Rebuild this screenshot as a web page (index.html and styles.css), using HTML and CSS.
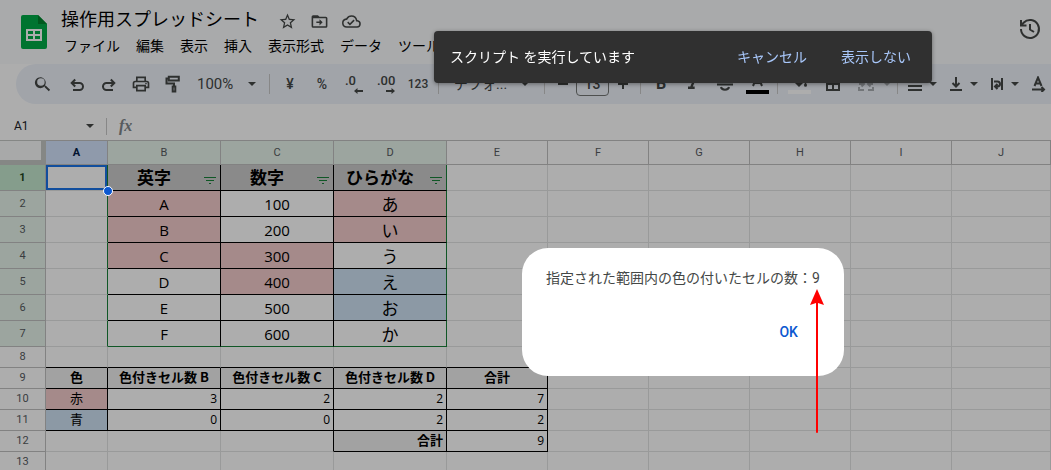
FILE: index.html
```html
<!DOCTYPE html>
<html lang="ja">
<head>
<meta charset="utf-8">
<title>操作用スプレッドシート</title>
<link rel="stylesheet" href="styles.css">
</head>
<body>
<div class="app">
  <header class="top">
    <svg class="logo" viewBox="0 0 26 34" aria-hidden="true">
      <path fill="#00ac47" d="M2 0h15l9 9v23a2 2 0 0 1-2 2H2a2 2 0 0 1-2-2V2a2 2 0 0 1 2-2z"/>
      <path fill="#00832d" d="M17 0l9 9h-9z"/>
      <path fill="#fff" fill-rule="evenodd" d="M5 14h16v12H5zM7 16v3h5v-3zM14 16v3h5v-3zM7 21v3h5v-3zM14 21v3h5v-3z"/>
    </svg>
    <div class="heading">
      <div class="title-row">
        <h1 class="title">操作用スプレッドシート</h1>
        <button class="mini" aria-label="スター"><svg width="20" height="20" viewBox="0 0 24 24"><path d="M22 9.24l-7.19-.62L12 2 9.19 8.63 2 9.24l5.46 4.73L5.82 21 12 17.27 18.18 21l-1.63-7.03zM12 15.4l-3.76 2.27 1-4.28-3.32-2.88 4.38-.38L12 6.1l1.71 4.04 4.38.38-3.32 2.88 1 4.28z"/></svg></button>
        <button class="mini" aria-label="移動"><svg width="20" height="20" viewBox="0 0 24 24"><path d="M20 6h-8l-2-2H4a2 2 0 0 0-2 2v12a2 2 0 0 0 2 2h16a2 2 0 0 0 2-2V8a2 2 0 0 0-2-2zm0 12H4V8h16zm-8-1 4-4-4-4v3H8v2h4z"/></svg></button>
        <button class="mini" aria-label="保存済み"><svg width="20" height="20" viewBox="0 0 24 24"><path d="M19.35 10.04A7.49 7.49 0 0 0 12 4a7.5 7.5 0 0 0-6.65 4.04A6 6 0 0 0 6 20h13a5 5 0 0 0 .35-9.96zM19 18H6a4 4 0 0 1-.42-7.98l1.07-.11.5-.95A5.47 5.47 0 0 1 12 6a5.5 5.5 0 0 1 5.39 4.43l.3 1.5 1.53.11A3 3 0 0 1 19 18zm-9-3.82-2.09-2.09L6.5 13.5 10 17l6.01-6.01-1.41-1.41z"/></svg></button>
      </div>
      <nav class="menu">
        <button>ファイル</button><button>編集</button><button>表示</button><button>挿入</button><button>表示形式</button><button>データ</button><button>ツール</button>
      </nav>
    </div>
    <button class="history" aria-label="変更履歴"><svg width="24" height="24" viewBox="0 0 24 24"><path class="line" d="M3 12a9 9 0 1 0 2.6-6.3L3 8.2M3 3v5.500h5.500M12 7v5.500l4 2.500"/></svg></button>
  </header>

  <div class="toolbar" role="toolbar">
    <button class="tb wide" aria-label="検索"><svg width="20" height="20" viewBox="0 0 24 24"><path d="M15.500 14h-.79l-.28-.27A6.5 6.500 0 1 0 13.730 14.710l.27.28v.79l5 4.990L20.490 19zM9.500 14a4.500 4.500 0 1 1 0-9 4.500 4.500 0 0 1 0 9z"/></svg></button>
    <button class="tb" aria-label="元に戻す"><svg class="low" width="16" height="16" viewBox="0 0 16 16"><path class="line" d="M4 13h6.500a3.500 3.500 0 0 0 0-7H3M6.200 2.500 2.700 6l3.500 3.500"/></svg></button>
    <button class="tb" aria-label="やり直し"><svg class="low" width="16" height="16" viewBox="0 0 16 16"><path class="line" d="M12 13H5.500a3.500 3.500 0 0 1 0-7H13M9.800 2.500 13.300 6 9.800 9.500"/></svg></button>
    <button class="tb" aria-label="印刷"><svg width="20" height="20" viewBox="0 0 24 24"><path d="M19 8h-1V3H6v5H5a3 3 0 0 0-3 3v6h4v4h12v-4h4v-6a3 3 0 0 0-3-3zM8 5h8v3H8zm8 14H8v-4h8zm2-4v-2H6v2H4v-4a1 1 0 0 1 1-1h14a1 1 0 0 1 1 1v4z"/><circle cx="18" cy="11.500" r="1"/></svg></button>
    <button class="tb" aria-label="書式を貼り付け"><svg width="16" height="18" viewBox="0 0 16 18"><path class="line" d="M3.800 1.800h10v3.700h-10zM3.800 3.500H1.500v5H9v3M7.700 11.500h2.600v5H7.700z"/></svg></button>
    <button class="zoom"><span>100%</span><i class="caret"></i></button>
    <span class="sep"></span>
    <button class="tb txt">¥</button>
    <button class="tb txt">%</button>
    <button class="tb dec" aria-label="小数点以下の桁数を減らす"><span>.0</span><svg width="9" height="6" viewBox="0 0 9 6"><path d="M0 3l3.500-3v2H9v2H3.500v2z"/></svg></button>
    <button class="tb dec" aria-label="小数点以下の桁数を増やす"><span>.00</span><svg width="9" height="6" viewBox="0 0 9 6"><path d="M9 3L5.500 0v2H0v2h5.500v2z"/></svg></button>
    <button class="tb num">123</button>
    <span class="sep"></span>
    <button class="font"><span>デフォ...</span><i class="caret"></i></button>
    <span class="sep"></span>
    <button class="step" aria-label="縮小"><svg width="12" height="12" viewBox="0 0 12 12"><path d="M1 5h10v2H1z"/></svg></button>
    <input class="size" value="13" aria-label="フォントサイズ">
    <button class="step" aria-label="拡大"><svg width="12" height="12" viewBox="0 0 12 12"><path d="M1 5h4V1h2v4h4v2H7v4H5V7H1z"/></svg></button>
    <span class="sep"></span>
    <button class="tb bold">B</button>
    <button class="tb" aria-label="斜体"><svg width="20" height="20" viewBox="0 0 24 24"><path d="M10 4v3h2.210l-3.420 8H6v3h8v-3h-2.210l3.420-8H18V4z"/></svg></button>
    <button class="tb" aria-label="取り消し線"><svg width="18" height="18" viewBox="0 0 18 18"><path class="line" d="M1 9.500h16M13 5c0-4-8-4-8 0M5 12c.5 3.500 7.500 3.500 8 0"/></svg></button>
    <button class="tb" aria-label="テキストの色"><svg width="23" height="22" viewBox="0 0 23 22"><path class="line" d="M7 13 11.500 2 16 13M8.500 10h6"/><path fill="#000" d="M0 17h23v4H0z"/></svg></button>
    <span class="sep"></span>
    <button class="tb paint" aria-label="塗りつぶしの色"><svg width="23" height="22" viewBox="0 0 23 22"><path d="M5 8l6-6 6 6-6 6zM17.500 9.500c1 1.300 1.500 2 1.500 2.700a1.500 1.500 0 0 1-3 0c0-.7.500-1.400 1.500-2.700z"/><path fill="#fff" d="M0 17h23v4H0z"/></svg></button>
    <button class="tb" aria-label="枠線"><svg width="14" height="14" viewBox="0 0 14 14"><path class="line" d="M1 1h12v12H1zM7 1v12M1 7h12"/></svg></button>
    <button class="split faint" aria-label="セルを結合"><svg width="16" height="16" viewBox="0 0 16 16"><path class="line" d="M6 2H1v3M10 2h5v3M6 14H1v-3M10 14h5v-3M1 8h4M15 8h-4M3.500 5.500 6 8l-2.500 2.500M12.500 5.500 10 8l2.500 2.500"/></svg><i class="caret"></i></button>
    <span class="sep"></span>
    <button class="split" aria-label="水平方向の配置"><svg width="14" height="14" viewBox="0 0 14 14"><path d="M0 0h14v2H0zM3 4h8v2H3zM0 8h14v2H0zM3 8h8v2H3zM0 12h14v2H0z"/></svg><i class="caret"></i></button>
    <button class="split" aria-label="垂直方向の配置"><svg width="14" height="16" viewBox="0 0 14 16"><path class="line" d="M7 1v9M3.500 7 7 10.500 10.500 7M1 14h12"/></svg><i class="caret"></i></button>
    <button class="split" aria-label="テキストの折り返し"><svg width="14" height="14" viewBox="0 0 14 14"><path class="line" d="M2 1v12M12 1v12M4 4.500h3.500a2.500 2.500 0 0 1 0 5H5.500M7.500 7 5 9.500 7.500 12"/></svg><i class="caret"></i></button>
    <button class="tb rotate" aria-label="テキストの回転"><svg width="14" height="16" viewBox="0 0 14 16"><path class="line" d="M2.500 10 6 1.500 9.500 10M3.500 7.500h5M0 13.500h11M9.500 11l2.500 2.500L9.500 16"/></svg></button>
  </div>

  <div class="formula">
    <input class="name-box" value="A1" aria-label="名前ボックス">
    <i class="caret"></i>
    <span class="bar"></span>
    <span class="fx">fx</span>
  </div>

  <table class="grid">
    <colgroup><col class="c-head"><col class="c-a"><col class="c-b"><col class="c-b"><col class="c-b"><col class="c-e"><col class="c-e"><col class="c-e"><col class="c-e"><col class="c-e"><col></colgroup>
    <thead>
      <tr><th class="corner"></th><th class="active">A</th><th class="on">B</th><th class="on">C</th><th class="on">D</th><th>E</th><th>F</th><th>G</th><th>H</th><th>I</th><th>J</th></tr>
    </thead>
    <tbody class="main">
      <tr><th class="now">1</th><td class="sel"><span class="handle"></span></td>
        <td class="label">英字<svg class="filter" width="12" height="8" viewBox="0 0 12 8"><path d="M0 0h12v1H0zM2 3h8v1H2zM5 6h2v1H5z"/></svg></td>
        <td class="label">数字<svg class="filter" width="12" height="8" viewBox="0 0 12 8"><path d="M0 0h12v1H0zM2 3h8v1H2zM5 6h2v1H5z"/></svg></td>
        <td class="label">ひらがな<svg class="filter" width="12" height="8" viewBox="0 0 12 8"><path d="M0 0h12v1H0zM2 3h8v1H2zM5 6h2v1H5z"/></svg></td>
        <td></td><td></td><td></td><td></td><td></td><td></td></tr>
      <tr><th>2</th><td></td><td class="red">A</td><td>100</td><td class="red">あ</td><td></td><td></td><td></td><td></td><td></td><td></td></tr>
      <tr><th>3</th><td></td><td class="red">B</td><td>200</td><td class="red">い</td><td></td><td></td><td></td><td></td><td></td><td></td></tr>
      <tr><th>4</th><td></td><td class="red">C</td><td class="red">300</td><td>う</td><td></td><td></td><td></td><td></td><td></td><td></td></tr>
      <tr><th>5</th><td></td><td>D</td><td class="red">400</td><td class="blue">え</td><td></td><td></td><td></td><td></td><td></td><td></td></tr>
      <tr><th>6</th><td></td><td>E</td><td>500</td><td class="blue">お</td><td></td><td></td><td></td><td></td><td></td><td></td></tr>
      <tr><th>7</th><td></td><td>F</td><td>600</td><td>か</td><td></td><td></td><td></td><td></td><td></td><td></td></tr>
    </tbody>
    <tbody class="sum">
      <tr><th>8</th><td class="kb"></td><td class="kb"></td><td class="kb"></td><td class="kb"></td><td class="kb"></td><td></td><td></td><td></td><td></td><td></td></tr>
      <tr><th>9</th><td class="k name">色</td><td class="k name">色付きセル数 B</td><td class="k name">色付きセル数 C</td><td class="k name">色付きセル数 D</td><td class="k name">合計</td><td></td><td></td><td></td><td></td><td></td></tr>
      <tr><th>10</th><td class="k mid red">赤</td><td class="k">3</td><td class="k">2</td><td class="k">2</td><td class="k">7</td><td></td><td></td><td></td><td></td><td></td></tr>
      <tr><th>11</th><td class="k mid blue">青</td><td class="k">0</td><td class="k">0</td><td class="k">2</td><td class="k">2</td><td></td><td></td><td></td><td></td><td></td></tr>
      <tr><th>12</th><td></td><td></td><td class="kr"></td><td class="k name end">合計</td><td class="k">9</td><td></td><td></td><td></td><td></td><td></td></tr>
      <tr><th>13</th><td></td><td></td><td></td><td></td><td></td><td></td><td></td><td></td><td></td><td></td></tr>
    </tbody>
  </table>
</div>

<div class="scrim"></div>

<div class="toast" role="status">
  <span class="message">スクリプト を実行しています</span>
  <button>キャンセル</button>
  <button>表示しない</button>
</div>

<div class="dialog" role="alertdialog" aria-labelledby="msg">
  <p id="msg">指定された範囲内の色の付いたセルの数：9</p>
  <button>OK</button>
</div>

<svg class="pointer" width="14" height="144" viewBox="0 0 14 144" aria-hidden="true"><path fill="#f00" d="M7 0l7 16-6-2v129a1 1 0 0 1-2 0V14l-6 2z"/></svg>
</body>
</html>
```

FILE: styles.css
```css
* { box-sizing: border-box; }

body {
  margin: 0;
  height: 100vh;
  overflow: hidden;
  background: #fff;
  color: #000;
  font: 14px/20px Roboto, "Noto Sans CJK JP", sans-serif;
}

button {
  margin: 0;
  padding: 0;
  border: 0;
  background: none;
  color: inherit;
  font: inherit;
  white-space: nowrap;
}

input {
  margin: 0;
  padding: 0;
  border: 0;
  background: none;
  font: inherit;
}

svg { display: block; flex: none; fill: #444746; }
.line { fill: none; stroke: #444746; stroke-width: 2; }

.app { height: 100%; overflow: hidden; }

/* header */
.top {
  display: flex;
  height: 64px;
  padding: 7px 8px 0 21px;
  background: #f9fbfd;
}
.logo { width: 26px; height: 34px; margin-top: 8px; }
.heading { flex: 1; padding-left: 14px; }
.title-row { display: flex; align-items: center; height: 26px; }
.title { margin: 0 12px 0 0; font-size: 18px; line-height: 26px; font-weight: 400; }
.mini { display: flex; justify-content: center; width: 32px; padding-top: 2px; }
.mini svg { width: 19px; height: 19px; }
.menu { display: flex; gap: 16px; padding: 3px 0 0 3px; }
.history { align-self: flex-start; padding: 10px 1px; }

/* toolbar */
.toolbar {
  display: flex;
  align-items: center;
  height: 40px;
  margin-left: 16px;
  padding-left: 9px;
  border-radius: 20px 0 0 20px;
  background: #edf2fa;
  color: #444746;
  overflow: hidden;
}
.toolbar > * { flex: none; }
.tb { display: flex; align-items: center; justify-content: center; width: 32px; height: 32px; }
.wide { width: 36px; }
.paint { width: 35px; }
.rotate { width: 28px; }
.low { margin-top: 2px; }
.txt { font-size: 14px; font-weight: 500; }
.num { font-size: 12px; font-weight: 500; }
.bold { font-size: 16px; font-weight: 700; }
.dec { flex-direction: column; align-items: flex-start; padding-left: 7px; font-size: 13px; line-height: 14px; font-weight: 500; }
.dec svg { margin-left: 9px; }
.zoom { display: flex; align-items: center; justify-content: space-between; width: 76px; padding: 0 9px 0 8px; font-size: 15px; }
.font { display: flex; align-items: center; justify-content: space-between; width: 97px; padding: 0 11px; }
.caret { flex: none; border: 4px solid transparent; border-top-color: #444746; border-bottom: 0; }
.sep { width: 1px; height: 20px; margin: 0 4px; background: #c7c7c7; }
.step { display: flex; align-items: center; justify-content: center; width: 27px; height: 24px; }
.size { width: 33px; height: 24px; border: 1px solid #747775; border-radius: 4px; text-align: center; color: #444746; font-weight: 500; }
.split { display: flex; align-items: center; gap: 7px; width: 41px; padding-left: 6px; }
.split.faint { gap: 9px; width: 44px; padding-left: 9px; opacity: .4; }

/* formula bar */
.formula { display: flex; align-items: center; height: 36px; padding: 8px 0 0 14px; }
.name-box { width: 72px; font-size: 12px; color: #202124; }
.bar { width: 1px; height: 17px; margin: 0 12px; background: #c7c7c7; }
.fx { color: #80868b; font: italic 700 16px/18px "Liberation Serif", serif; }

/* sheet */
.grid { width: 100%; table-layout: fixed; border-collapse: separate; border-spacing: 0; }
.c-head { width: 46px; }
.c-a { width: 62px; }
.c-b { width: 113px; }
.c-e { width: 101px; }
.grid th, .grid td { padding: 0; border: solid #e2e3e3; border-width: 0 1px 1px 0; white-space: nowrap; }
.grid th { border-color: #c0c0c0; color: #575b5f; font-size: 11px; line-height: 14px; font-weight: 400; }
.grid thead th { height: 25px; border-top-width: 1px; }
.grid thead .corner { border: solid #c4c7c5; border-width: 1px 5px 5px 0; background: #f8f9fa; }
.grid .active { background: #d3e3fd; color: #041e49; font-weight: 700; }
.grid .on, .main th { background: #e6f4ea; }
.grid .now { background: #c4e8cf; color: #1e4620; font-weight: 700; }

.main tr { height: 26px; }
.main td { line-height: 24px; text-align: center; font-size: 17px; font-family: "Noto Sans CJK JP", sans-serif; }
.main td:nth-child(3), .main td:nth-child(4) { border-color: #000; font-family: "Open Sans", "Noto Sans CJK JP", sans-serif; font-size: 15px; }
.main td:nth-child(5) { border-color: #000; }
.main td:nth-child(2), .main td:nth-child(5) { border-right-color: #188038; }
.main tr:last-child td:nth-child(n+3):nth-child(-n+5) { border-bottom-color: #188038; }
.main .label.label { position: relative; padding: 0 20px 2px 0; background: #ccc; font: 700 17px/22px "Noto Sans CJK JP", sans-serif; }
.filter { position: absolute; right: 4px; bottom: 5px; fill: #188038; }
.grid .sel { position: relative; box-shadow: inset 0 0 0 2px #1a73e8; }
.handle { position: absolute; z-index: 1; right: -6px; bottom: -6px; width: 10px; height: 10px; border: 1px solid #fff; border-radius: 50%; background: #0b57d0; }

.sum tr { height: 21px; }
.grid.grid .sum td, .sum td { text-align: right; font: 12px/18px "Open Sans", "Noto Sans CJK JP", sans-serif; }
.grid .sum .k { padding-right: 3px; border-color: #000; }
.grid .sum .kb { border-bottom-color: #000; }
.grid .sum .kr { border-right-color: #000; }
.grid.grid .sum .name { padding: 0 0 2px; background: #efefef; text-align: center; font: 700 13px/18px "Noto Sans CJK JP", sans-serif; }
.grid.grid .sum .end { padding-right: 3px; text-align: right; }
.grid.grid .sum .mid { padding: 0 0 2px; text-align: center; font-size: 13px; }
.grid .red { background: #f4cccc; }
.grid .blue { background: #cfe2f3; }

/* layers over the sheet */
.scrim { position: fixed; inset: 0; background: rgba(0, 0, 0, .32); }

.toast {
  position: absolute;
  left: 434px;
  top: 31px;
  display: flex;
  align-items: center;
  gap: 34px;
  padding: 16px 21px 16px 16px;
  border-radius: 4px;
  background: #303030;
  box-shadow: 0 1px 4px rgba(0, 0, 0, .4);
  color: #fff;
}
.toast .message { margin-right: 68px; white-space: nowrap; }
.toast button { color: #a8c7fa; }

.dialog {
  position: absolute;
  left: 522px;
  top: 248px;
  display: flex;
  flex-direction: column;
  align-items: flex-end;
  padding: 20px 24px 34px;
  border-radius: 26px;
  background: #fff;
  color: #444746;
}
.dialog p { margin: 0 0 34px; white-space: nowrap; }
.dialog button { margin-right: 22px; color: #0b57d0; font-weight: 500; }

.pointer { position: absolute; left: 810px; top: 289px; }
```
